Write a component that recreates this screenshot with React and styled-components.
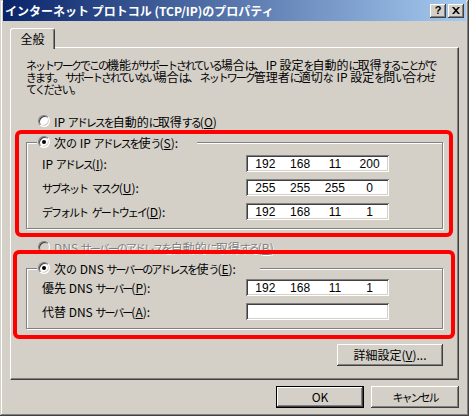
import React from "react";
import styled, { createGlobalStyle, css } from "styled-components";

const ui = `"Noto Sans CJK JP", "Liberation Sans", sans-serif`;

const GlobalStyle = createGlobalStyle`
  html, body { margin: 0; padding: 0; background: #d4d0c8; }
  body {
    font-family: ${ui};
    font-size: 12px;
    color: #000;
  }
  u { text-decoration: underline; text-underline-offset: 1px; }
`;

/* MS UI Gothic draws kana narrower than kanji: kana runs get their own span */
const KanaRun = styled.span`
  font-size: 11px;
  letter-spacing: ${(p) => p.$ls}px;
  margin-right: ${(p) => (p.$tail ? 2 : 0)}px;
`;

const KANA = /([\u3040-\u30ff]+)/;

const Jp = ({ children, ls = -2 }) => (
  <>
    {React.Children.map(children, (child) => {
      if (typeof child !== "string") return child;
      const parts = child.split(KANA);
      return parts.map((part, i) =>
        i % 2 === 1 ? (
          <KanaRun
            key={i}
            $ls={ls}
            $tail={(parts[i + 1] || "").startsWith(" ")}
          >
            {part}
          </KanaRun>
        ) : (
          part
        )
      );
    })}
  </>
);

const Window = styled.div`
  position: relative;
  width: 469px;
  height: 416px;
  box-sizing: border-box;
  padding: 0 3px 3px 3px;
  background: #d4d0c8;
  box-shadow: inset -1px -1px #404040, inset 1px 1px #d4d0c8,
    inset -2px -2px #808080, inset 2px 2px #fff;
  display: flex;
  flex-direction: column;
  overflow: hidden;
`;

const TitleBar = styled.div`
  flex: none;
  height: 21px;
  display: flex;
  align-items: center;
  padding: 0 2px 0 2px;
  background: linear-gradient(to right, #0a246a, #a6caf0);
  color: #fff;
  font-weight: bold;
  font-size: 12px;
  white-space: nowrap;
`;

const TitleButtons = styled.div`
  margin-left: auto;
  display: flex;
  gap: 2px;
`;

const raised = css`
  background: #d4d0c8;
  box-shadow: inset -1px -1px #404040, inset 1px 1px #fff,
    inset -2px -2px #808080, inset 2px 2px #d4d0c8;
`;

const TitleBtn = styled.div`
  ${raised};
  width: 16px;
  height: 14px;
  box-sizing: border-box;
  display: flex;
  align-items: center;
  justify-content: center;
  color: #000;
  font: bold 11px "Liberation Sans", sans-serif;
  padding-bottom: 1px;
`;

const Body = styled.div`
  flex: 1;
  display: flex;
  flex-direction: column;
  padding: 7px 7px 0 7px;
`;

const TabStrip = styled.div`
  display: flex;
  height: 19px;
`;

const Tab = styled.div`
  position: relative;
  z-index: 1;
  width: 45px;
  height: 21px;
  box-sizing: border-box;
  background: #d4d0c8;
  border-left: 1px solid #fff;
  border-top: 1px solid #fff;
  border-right: 1px solid #404040;
  border-radius: 3px 3px 0 0;
  box-shadow: inset -1px 0 #808080;
  display: flex;
  align-items: center;
  justify-content: center;
  padding-bottom: 1px;
`;

const Panel = styled.div`
  height: 333px;
  box-sizing: border-box;
  border: 1px solid;
  border-color: #fff #404040 #404040 #fff;
  box-shadow: inset -1px -1px #808080;
  padding: 11px 15px 0 15px;
  display: flex;
  flex-direction: column;
`;

const Description = styled.p`
  margin: 0;
  line-height: 12px;
  white-space: nowrap;
`;

const RadioRow = styled.div`
  display: flex;
  align-items: center;
  gap: 4px;
  height: 14px;
  padding-left: 12px;
  margin-top: ${(p) => p.$mt}px;
  white-space: nowrap;
  color: ${(p) => (p.$disabled ? "#808080" : "#000")};
  text-shadow: ${(p) => (p.$disabled ? "1px 1px 0 #fff" : "none")};
`;

const Radio = styled.span`
  position: relative;
  flex: none;
  width: 12px;
  height: 12px;
  box-sizing: border-box;
  border-radius: 50%;
  border: 1px solid;
  border-color: #808080 #fff #fff #808080;
  background: ${(p) => (p.$disabled ? "#d4d0c8" : "#fff")};
  box-shadow: inset 1px 1px #404040, inset -1px -1px #d4d0c8;
  ${(p) =>
    p.$checked &&
    css`
      &::after {
        content: "";
        position: absolute;
        left: 3px;
        top: 3px;
        width: 4px;
        height: 4px;
        border-radius: 50%;
        background: #000;
      }
    `}
`;

const GroupBox = styled.div`
  margin-top: ${(p) => p.$mt}px;
  border: 1px solid #808080;
  box-shadow: inset 1px 1px #fff, 1px 1px #fff;
  padding-bottom: 8px;
`;

const Legend = styled.div`
  display: flex;
  align-items: center;
  gap: 4px;
  width: fit-content;
  height: 14px;
  margin: -8px 0 0 10px;
  padding: 0 ${(p) => p.$pr}px 0 1px;
  background: #d4d0c8;
  white-space: nowrap;
`;

const Rows = styled.div`
  display: grid;
  grid-template-columns: 204px 143px;
  row-gap: 7px;
  align-items: center;
  margin-top: ${(p) => p.$mt}px;
  padding-left: 15px;
`;

const Label = styled.span`
  white-space: nowrap;
`;

const IPField = styled.div`
  height: 17px;
  box-sizing: border-box;
  padding: 2px 2px 0 2px;
  background: #fff;
  box-shadow: inset 1px 1px #808080, inset -1px -1px #fff,
    inset 2px 2px #404040, inset -2px -2px #d4d0c8;
  display: grid;
  grid-template-columns: repeat(4, 1fr);
  align-items: center;
  font: 12px "Liberation Sans", sans-serif;
  line-height: 13px;
`;

const Octet = styled.span`
  text-align: center;
`;

const Button = styled.div`
  ${raised};
  width: ${(p) => p.$w}px;
  height: 22px;
  box-sizing: border-box;
  display: flex;
  align-items: center;
  justify-content: center;
  white-space: nowrap;
  padding-bottom: 1px;
  ${(p) =>
    p.$default &&
    css`
      border: 1px solid #000;
    `}
`;

const DetailButton = styled(Button)`
  align-self: flex-end;
  margin-top: 15px;
`;

const ButtonRow = styled.div`
  display: flex;
  justify-content: flex-end;
  gap: 7px;
  margin-top: 6px;
`;

const Annotation = styled.div`
  position: absolute;
  left: ${(p) => p.$x}px;
  top: ${(p) => p.$y}px;
  width: ${(p) => p.$w}px;
  height: ${(p) => p.$h}px;
  box-sizing: border-box;
  border: 4px solid #ff0000;
  border-radius: 6px;
  pointer-events: none;
`;

const CloseGlyph = () => (
  <svg width="8" height="7" viewBox="0 0 8 7">
    <path d="M0 0h2l2 2.3L6 0h2L5 3.5 8 7H6L4 4.7 2 7H0l3-3.5z" fill="#000" />
  </svg>
);

const IP = ({ value }) => (
  <IPField>
    {(value || ["", "", "", ""]).map((v, i) => (
      <Octet key={i}>{v}</Octet>
    ))}
  </IPField>
);

export default function App() {
  return (
    <>
      <GlobalStyle />
      <Window>
        <TitleBar>
          <span>インターネット プロトコル (TCP/IP)のプロパティ</span>
          <TitleButtons>
            <TitleBtn>?</TitleBtn>
            <TitleBtn>
              <CloseGlyph />
            </TitleBtn>
          </TitleButtons>
        </TitleBar>
        <Body>
          <TabStrip>
            <Tab>全般</Tab>
          </TabStrip>
          <Panel>
            <Description>
              <Jp>ネットワークでこの機能がサポートされている場合は、IP 設定を自動的に取得することがで</Jp>
              <br />
              <Jp>きます。サポートされていない場合は、ネットワーク管理者に適切な IP 設定を問い合わせ</Jp>
              <br />
              <Jp>てください。</Jp>
            </Description>
            <RadioRow $mt={19}>
              <Radio />
              <span>
                <Jp>
                  IP アドレスを自動的に取得する(<u>O</u>)
                </Jp>
              </span>
            </RadioRow>
            <GroupBox $mt={14}>
              <Legend $pr={19}>
                <Radio $checked />
                <span>
                  <Jp>
                    次の IP アドレスを使う(<u>S</u>):
                  </Jp>
                </span>
              </Legend>
              <Rows $mt={6}>
                <Label>
                  <Jp>
                    IP アドレス(<u>I</u>):
                  </Jp>
                </Label>
                <IP value={["192", "168", "11", "200"]} />
                <Label>
                  <Jp>
                    サブネット マスク(<u>U</u>):
                  </Jp>
                </Label>
                <IP value={["255", "255", "255", "0"]} />
                <Label>
                  <Jp>
                    デフォルト ゲートウェイ(<u>D</u>):
                  </Jp>
                </Label>
                <IP value={["192", "168", "11", "1"]} />
              </Rows>
            </GroupBox>
            <RadioRow $mt={11} $disabled>
              <Radio $disabled />
              <span>
                <Jp>
                  DNS サーバーのアドレスを自動的に取得する(<u>B</u>)
                </Jp>
              </span>
            </RadioRow>
            <GroupBox $mt={14}>
              <Legend $pr={24}>
                <Radio $checked />
                <span>
                  <Jp>
                    次の DNS サーバーのアドレスを使う(<u>E</u>):
                  </Jp>
                </span>
              </Legend>
              <Rows $mt={4}>
                <Label>
                  <Jp>
                    優先 DNS サーバー(<u>P</u>):
                  </Jp>
                </Label>
                <IP value={["192", "168", "11", "1"]} />
                <Label>
                  <Jp>
                    代替 DNS サーバー(<u>A</u>):
                  </Jp>
                </Label>
                <IP />
              </Rows>
            </GroupBox>
            <DetailButton $w={106}>
              詳細設定(<u>V</u>)...
            </DetailButton>
          </Panel>
          <ButtonRow>
            <Button $w={88} $default>
              OK
            </Button>
            <Button $w={88}>
              <Jp>キャンセル</Jp>
            </Button>
          </ButtonRow>
        </Body>
        <Annotation $x={15} $y={130} $w={438} $h={107} />
        <Annotation $x={13} $y={250} $w={442} $h={89} />
      </Window>
    </>
  );
}
